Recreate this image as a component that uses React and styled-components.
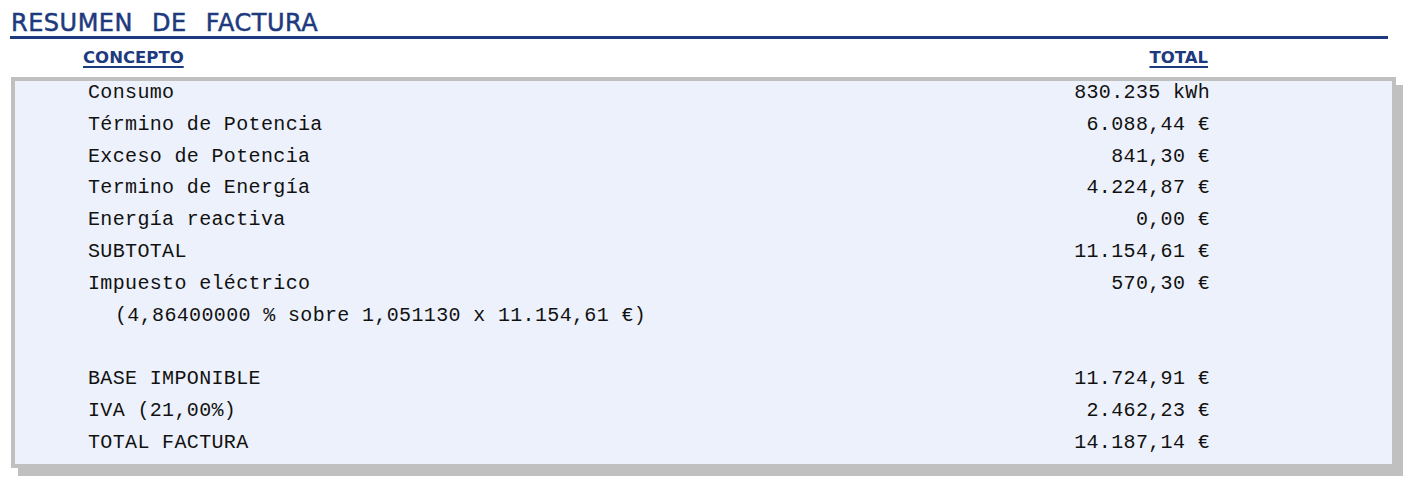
import React from 'react'
import styled, { createGlobalStyle } from 'styled-components'

const Global = createGlobalStyle`
  body {
    margin: 0;
    background: #ffffff;
  }
`

const Page = styled.div`
  padding: 0 0 16px 10px;
  width: 1378px;
`

const Title = styled.h1`
  margin: 0;
  padding-top: 11px;
  padding-left: 1px;
  font-family: "DejaVu Sans", Verdana, sans-serif;
  font-weight: normal;
  font-size: 24px;
  line-height: 25px;
  letter-spacing: 0.5px;
  word-spacing: 11px;
  color: #1d3a7e;
  -webkit-text-stroke: 0.5px #1d3a7e;
  border-bottom: 3px solid #1d3a7e;
`

const HeadRow = styled.div`
  display: flex;
  justify-content: space-between;
  margin-top: 9px;
  padding: 0 180px 0 73px;
`

const HeadCell = styled.span`
  font-family: "DejaVu Sans", Tahoma, sans-serif;
  font-weight: bold;
  font-size: 16.5px;
  line-height: 20px;
  color: #1d3a7e;
  text-decoration: underline;
  text-decoration-thickness: 2px;
  text-underline-offset: 3px;
`

const Box = styled.div`
  margin: 9px 0 0 1px;
  padding-top: 1px;
  width: 1385px;
  box-sizing: border-box;
  background: #edf1fb;
  border: 4px solid #c0c0c0;
  box-shadow: 7px 8px 0 #c0c0c0;
`

const Row = styled.div`
  display: flex;
  justify-content: space-between;
  height: 31.8px;
  padding: 0 182px 0 ${p => 73 + (p.$indent || 0)}px;
  font-family: "Liberation Mono", "Courier New", monospace;
  font-size: 20px;
  line-height: 21.8px;
  letter-spacing: 0.35px;
  color: #111111;
  white-space: pre;
`

const rows = [
  ['Consumo', '830.235 kWh'],
  ['Término de Potencia', '6.088,44 €'],
  ['Exceso de Potencia', '841,30 €'],
  ['Termino de Energía', '4.224,87 €'],
  ['Energía reactiva', '0,00 €'],
  ['SUBTOTAL', '11.154,61 €'],
  ['Impuesto eléctrico', '570,30 €'],
  ['(4,86400000 % sobre 1,051130 x 11.154,61 €)', '', 27],
  ['', ''],
  ['BASE IMPONIBLE', '11.724,91 €'],
  ['IVA (21,00%)', '2.462,23 €'],
  ['TOTAL FACTURA', '14.187,14 €'],
]

export default function App() {
  return (
    <Page>
      <Global />
      <Title>RESUMEN DE FACTURA</Title>
      <HeadRow>
        <HeadCell>CONCEPTO</HeadCell>
        <HeadCell>TOTAL</HeadCell>
      </HeadRow>
      <Box>
        {rows.map(([name, value, indent], i) => (
          <Row key={i} $indent={indent}>
            <span>{name}</span>
            <span>{value}</span>
          </Row>
        ))}
      </Box>
    </Page>
  )
}
